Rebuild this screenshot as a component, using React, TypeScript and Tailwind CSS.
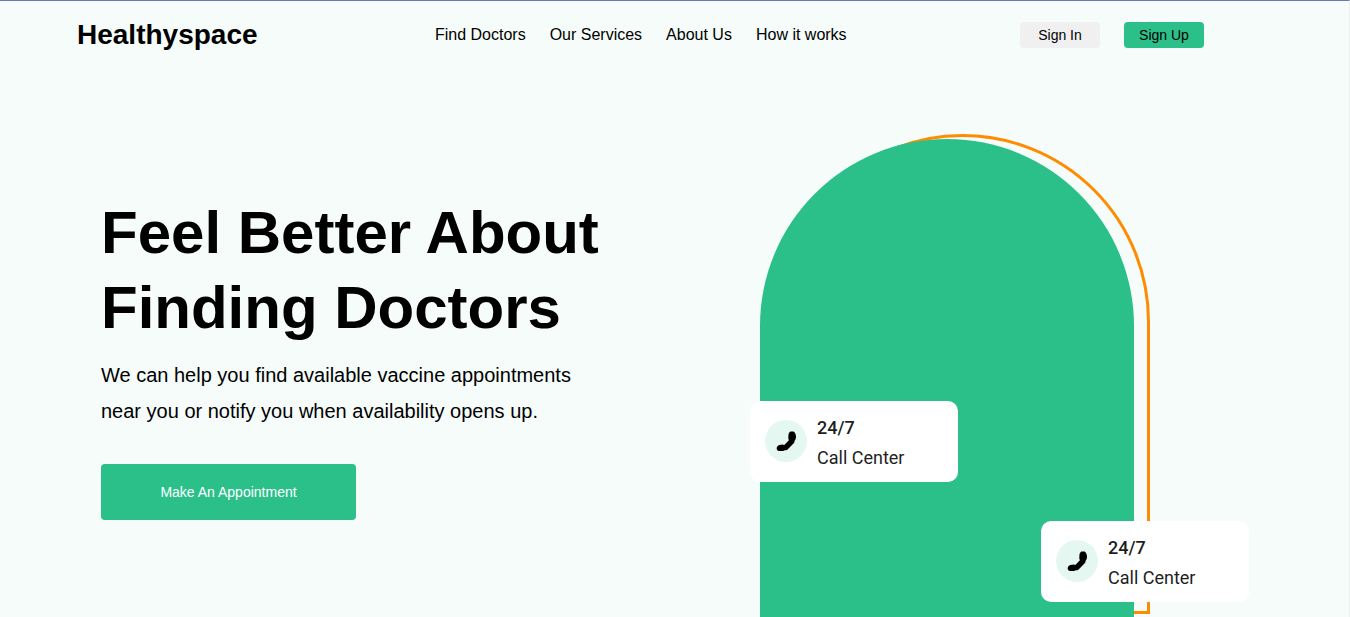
import React from "react";

const links = ["Find Doctors", "Our Services", "About Us", "How it works"];

function PhoneIcon() {
  return (
    <svg viewBox="0 0 20 20" className="size-5" fill="#000" aria-hidden="true">
      <path d="M14.4 0.6L17.6 0.4C18.8 1.2 19.8 3 20 5C20.1 6.8 19.7 8.600 18.600 9.800L18.200 11.8L11.600 18.4C10.6 19.2 9.400 19 8.600 19.300C7 20.3 4.8 20.5 3 20C1.700 19.600 0.6 18.600 0.7 17.2C0.8 15.700 1.900 14.600 3.300 14.100L6.500 13.500L8.300 13.900L12.900 9.300L12.300 7.400L12.400 4.400C12.500 2.700 13.200 1.300 14.400 0.6Z" />
    </svg>
  );
}

function CallCard() {
  return (
    <div className="flex h-[81px] w-[208px] items-center gap-2.5 rounded-[10px] bg-white pb-px pl-[15px] font-[Roboto,sans-serif] text-lg text-[#1d1f23]">
      <span className="flex size-[42px] items-center justify-center rounded-full bg-[#e4f7f1]">
        <PhoneIcon />
      </span>
      <div className="pt-1 leading-[30px]">
        <p className="font-medium">24/7</p>
        <p>Call Center</p>
      </div>
    </div>
  );
}

export default function App() {
  return (
    <div className="min-h-screen overflow-hidden border-t border-r border-t-[#6577bd] border-r-[#eeeeee] bg-[#f6fcfa] font-['Liberation_Sans',Arial,sans-serif] text-black">
      <header className="flex h-[68px] items-center justify-between pr-[145px] pl-[77px]">
        <a href="#home" className="pr-1 text-[28px] leading-8 font-bold">Healthyspace</a>
        <nav className="flex gap-6 text-base">
          {links.map((label) => (
            <a key={label} href="#section">{label}</a>
          ))}
        </nav>
        <div className="flex gap-6 text-sm">
          <button type="button" className="h-[26px] w-20 rounded bg-[#f0f0f0]">Sign In</button>
          <button type="button" className="h-[26px] w-20 rounded bg-[#2bbf8a]">Sign Up</button>
        </div>
      </header>
      <main className="flex items-start justify-between pr-[199px] pl-[101px]">
        <section className="w-[530px] pt-[126px]">
          <h1 className="text-[60px] leading-[75px] font-bold">Feel Better About Finding Doctors</h1>
          <p className="mt-3 max-w-[500px] text-xl leading-9">
            We can help you find available vaccine appointments near you or notify you when availability opens up.
          </p>
          <button type="button" className="mt-[35px] h-14 w-[255px] rounded bg-[#2bbf8a] text-sm text-white">
            Make An Appointment
          </button>
        </section>
        <section className="relative mt-[65px] h-[483px] w-[390px] shrink-0">
          <div className="absolute top-0 right-0 h-[480px] w-[375px] rounded-t-full border-[3px] border-[#ff8c00]" />
          <div className="absolute top-[5px] left-0 h-[500px] w-[374px] rounded-t-full bg-[#2bbf8a]" />
          <div className="absolute top-[267px] -left-2.5">
            <CallCard />
          </div>
          <div className="absolute top-[387px] -right-[99px]">
            <CallCard />
          </div>
        </section>
      </main>
    </div>
  );
}
